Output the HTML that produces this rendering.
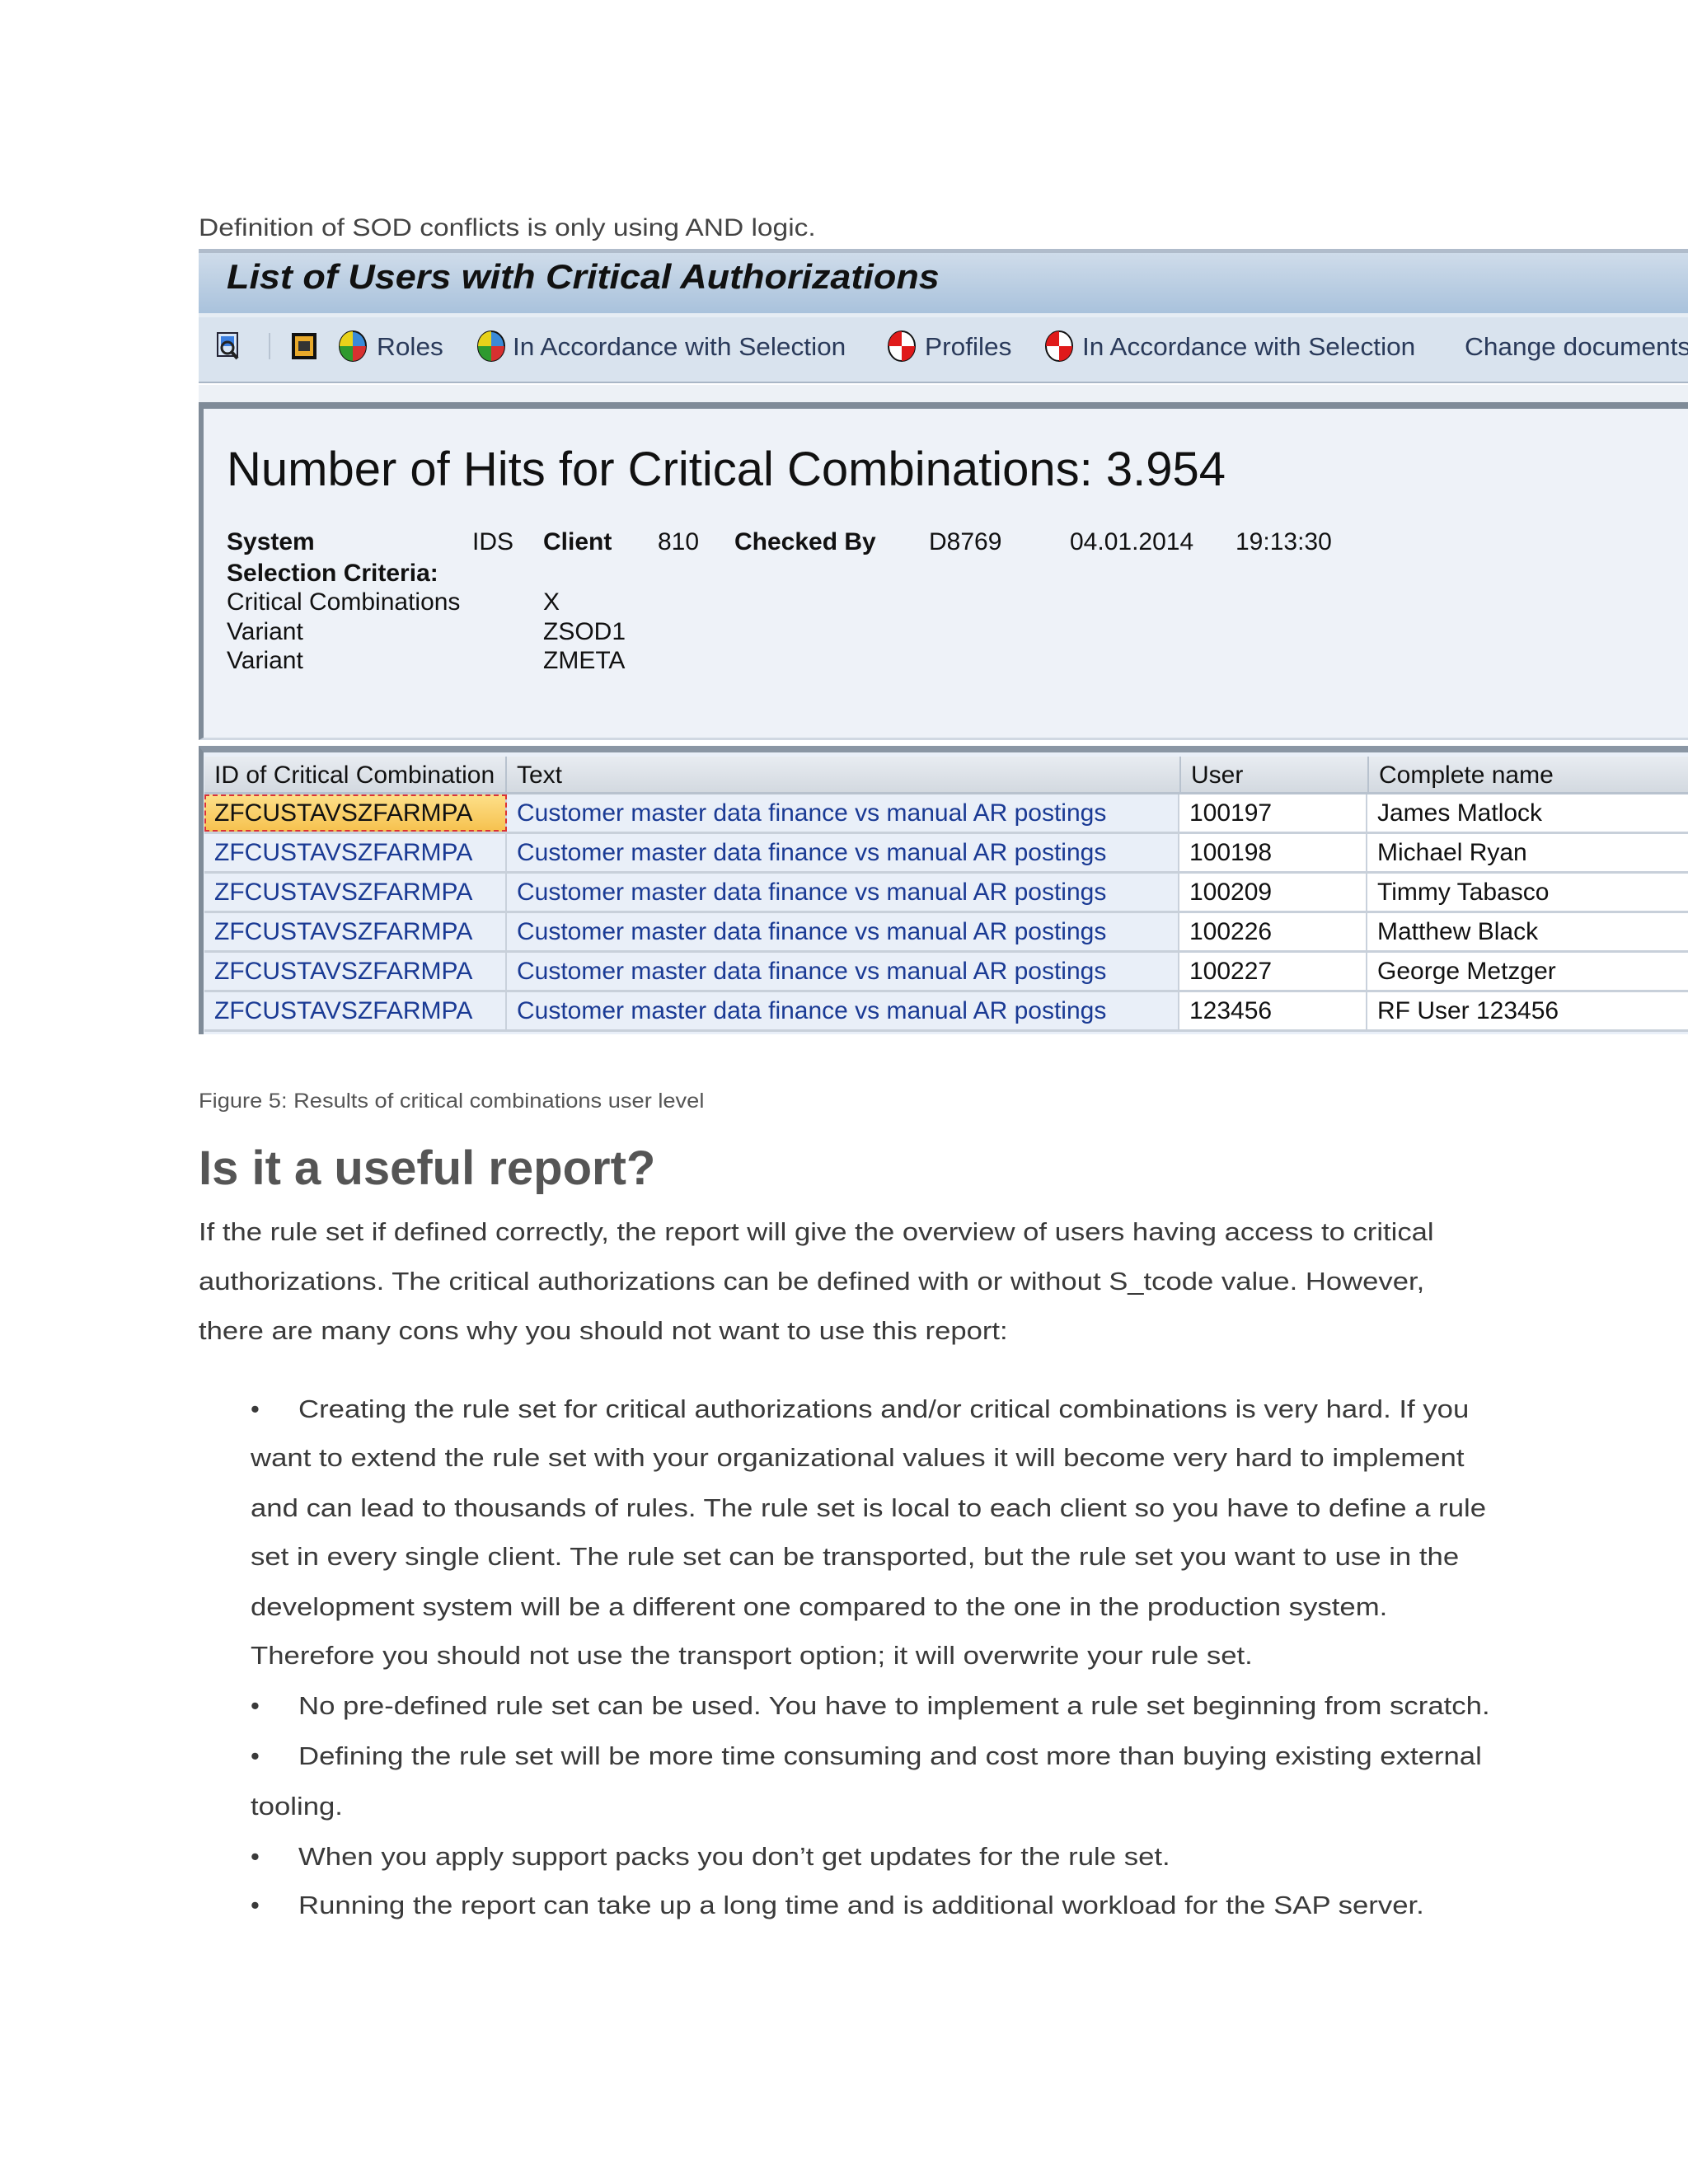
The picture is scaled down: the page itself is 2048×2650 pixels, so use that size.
<!DOCTYPE html>
<html><head><meta charset="utf-8"><style>
*{margin:0;padding:0;box-sizing:border-box}
body{width:2048px;height:2650px;background:#fff;position:relative;overflow:hidden;font-family:"Liberation Sans",sans-serif}
.a{position:absolute;white-space:nowrap}
.sap{font-family:"Liberation Sans",sans-serif;color:#111}
.tb{font-size:31px;color:#2a3a5a;transform:scaleX(1.02);transform-origin:left}
.p{font-size:31px;color:#3a3a3a;left:241px;transform:scaleX(1.117);transform-origin:left}
.b{font-size:31px;color:#3a3a3a;transform:scaleX(1.12);transform-origin:left}
.row{position:absolute;left:248px;width:1800px;height:48px;border-bottom:3px solid #c8d0da}
.cell{position:absolute;top:0;height:45px;line-height:45px;font-size:30px;padding-left:12px;white-space:nowrap}
.c1{left:0;width:367px;background:#e9eff8;color:#1a3a94;border-right:2px solid #c9d1dc}
.c2{left:367px;width:816px;background:#e9eff8;color:#1a3a94;border-right:2px solid #c9d1dc}
.c3{left:1183px;width:228px;background:#fff;color:#111;border-right:2px solid #c9d1dc}
.c4{left:1411px;width:400px;background:#fff;color:#111}
</style></head><body>
<div class="a p" style="top:260px;font-size:30px;color:#444">Definition of SOD conflicts is only using AND logic.</div>

<div class="a" style="left:241px;top:302px;width:1807px;height:5px;background:#b0bccb"></div>
<div class="a" style="left:241px;top:307px;width:1807px;height:73px;background:linear-gradient(#cfdcea,#a9c2dc)"></div>
<div class="a" style="left:275px;top:312px;font-size:42px;font-weight:bold;font-style:italic;color:#111;transform:scaleX(1.07);transform-origin:left">List of Users with Critical Authorizations</div>
<div class="a" style="left:241px;top:380px;width:1807px;height:5px;background:#e6edf4"></div>
<div class="a" style="left:241px;top:385px;width:1807px;height:80px;background:#d9e3ee;border-bottom:2px solid #a9b6c6"></div>
<svg class="a" style="left:262px;top:402px" width="30" height="36" viewBox="0 0 30 36"><rect x="2" y="2" width="24" height="28" fill="#d8e6f6" stroke="#223" stroke-width="2"/><rect x="6" y="6" width="16" height="12" fill="#3a7ee0"/><circle cx="14" cy="20" r="7" fill="none" stroke="#222" stroke-width="3"/><line x1="19" y1="25" x2="26" y2="33" stroke="#222" stroke-width="4"/></svg>
<div class="a" style="left:326px;top:404px;width:2px;height:32px;background:#b8c4d2"></div>
<svg class="a" style="left:352px;top:402px" width="34" height="36"><rect x="2" y="2" width="30" height="32" fill="#111"/><rect x="6" y="6" width="22" height="24" fill="#e8a92a"/><rect x="10" y="12" width="14" height="12" fill="#333"/></svg>
<svg class="a" style="left:410px;top:400px" width="36" height="40" viewBox="0 0 36 40"><ellipse cx="18" cy="20" rx="16" ry="18" fill="#3a8ad8" stroke="#111" stroke-width="2"/><path d="M18 2A16 18 0 0 0 2 20H18Z" fill="#e8d21a"/><path d="M2 20A16 18 0 0 0 18 38V20Z" fill="#2e9a2e"/><path d="M18 38A16 18 0 0 0 34 20H18Z" fill="#d83030"/></svg>
<div class="a tb" style="left:457px;top:403px">Roles</div>
<svg class="a" style="left:578px;top:400px" width="36" height="40" viewBox="0 0 36 40"><ellipse cx="18" cy="20" rx="16" ry="18" fill="#3a8ad8" stroke="#111" stroke-width="2"/><path d="M18 2A16 18 0 0 0 2 20H18Z" fill="#e8d21a"/><path d="M2 20A16 18 0 0 0 18 38V20Z" fill="#2e9a2e"/><path d="M18 38A16 18 0 0 0 34 20H18Z" fill="#d83030"/></svg>
<div class="a tb" style="left:622px;top:403px">In Accordance with Selection</div>
<svg class="a" style="left:1076px;top:400px" width="36" height="40" viewBox="0 0 36 40"><ellipse cx="18" cy="20" rx="16" ry="18" fill="#fff" stroke="#111" stroke-width="2"/><path d="M18 2A16 18 0 0 0 2 20H18Z" fill="#e01a1a"/><path d="M18 38A16 18 0 0 0 34 20H18Z" fill="#e01a1a"/></svg>
<div class="a tb" style="left:1122px;top:403px">Profiles</div>
<svg class="a" style="left:1267px;top:400px" width="36" height="40" viewBox="0 0 36 40"><ellipse cx="18" cy="20" rx="16" ry="18" fill="#fff" stroke="#111" stroke-width="2"/><path d="M18 2A16 18 0 0 0 2 20H18Z" fill="#e01a1a"/><path d="M18 38A16 18 0 0 0 34 20H18Z" fill="#e01a1a"/></svg>
<div class="a tb" style="left:1313px;top:403px">In Accordance with Selection</div>
<div class="a tb" style="left:1777px;top:403px">Change documents</div>
<div class="a" style="left:241px;top:467px;width:1807px;height:23px;background:#edf1f6"></div>

<div class="a" style="left:241px;top:488px;width:1807px;height:410px;background:#eef2f8;border-top:8px solid #7f8b98;border-left:6px solid #7f8b98;border-bottom:3px solid #d0d8e2"></div>
<div class="a sap" style="left:275px;top:536px;font-size:58px">Number of Hits for Critical Combinations: 3.954</div>
<div class="a sap" style="left:275px;top:641px;font-size:30px;font-weight:bold">System</div>
<div class="a sap" style="left:573px;top:641px;font-size:30px">IDS</div>
<div class="a sap" style="left:659px;top:641px;font-size:30px;font-weight:bold">Client</div>
<div class="a sap" style="left:798px;top:641px;font-size:30px">810</div>
<div class="a sap" style="left:891px;top:641px;font-size:30px;font-weight:bold">Checked By</div>
<div class="a sap" style="left:1127px;top:641px;font-size:30px">D8769</div>
<div class="a sap" style="left:1298px;top:641px;font-size:30px">04.01.2014</div>
<div class="a sap" style="left:1499px;top:641px;font-size:30px">19:13:30</div>
<div class="a sap" style="left:275px;top:679px;font-size:30px;font-weight:bold">Selection Criteria:</div>
<div class="a sap" style="left:275px;top:714px;font-size:30px">Critical Combinations</div>
<div class="a sap" style="left:659px;top:714px;font-size:30px">X</div>
<div class="a sap" style="left:275px;top:750px;font-size:30px">Variant</div>
<div class="a sap" style="left:659px;top:750px;font-size:30px">ZSOD1</div>
<div class="a sap" style="left:275px;top:785px;font-size:30px">Variant</div>
<div class="a sap" style="left:659px;top:785px;font-size:30px">ZMETA</div>

<div class="a" style="left:241px;top:905px;width:1807px;height:350px;background:#e9eff8;border-left:6px solid #7f8b98;border-top:8px solid #8a96a4"></div>
<div class="row" style="top:918px;height:46px;border-bottom:3px solid #b8c2ce;background:linear-gradient(#e8ecf1,#d3d9e0)">
<div class="cell" style="left:0;width:367px;color:#111;border-right:2px solid #b8c2ce">ID of Critical Combination</div>
<div class="cell" style="left:367px;color:#111">Text</div>
<div class="cell" style="left:1183px;color:#111;border-left:2px solid #b8c2ce;height:43px">User</div>
<div class="cell" style="left:1411px;color:#111;border-left:2px solid #b8c2ce;height:43px">Complete name</div>
</div>
<div class="row" style="top:964px"><div class="cell c1" style="background:linear-gradient(#fde08a,#f6c14e);color:#111;outline:2px dashed #d33;outline-offset:-2px">ZFCUSTAVSZFARMPA</div><div class="cell c2">Customer master data finance vs manual AR postings</div><div class="cell c3">100197</div><div class="cell c4">James Matlock</div></div>
<div class="row" style="top:1012px"><div class="cell c1">ZFCUSTAVSZFARMPA</div><div class="cell c2">Customer master data finance vs manual AR postings</div><div class="cell c3">100198</div><div class="cell c4">Michael Ryan</div></div>
<div class="row" style="top:1060px"><div class="cell c1">ZFCUSTAVSZFARMPA</div><div class="cell c2">Customer master data finance vs manual AR postings</div><div class="cell c3">100209</div><div class="cell c4">Timmy Tabasco</div></div>
<div class="row" style="top:1108px"><div class="cell c1">ZFCUSTAVSZFARMPA</div><div class="cell c2">Customer master data finance vs manual AR postings</div><div class="cell c3">100226</div><div class="cell c4">Matthew Black</div></div>
<div class="row" style="top:1156px"><div class="cell c1">ZFCUSTAVSZFARMPA</div><div class="cell c2">Customer master data finance vs manual AR postings</div><div class="cell c3">100227</div><div class="cell c4">George Metzger</div></div>
<div class="row" style="top:1204px"><div class="cell c1">ZFCUSTAVSZFARMPA</div><div class="cell c2">Customer master data finance vs manual AR postings</div><div class="cell c3">123456</div><div class="cell c4">RF User 123456</div></div>

<div class="a" style="left:241px;top:1322px;font-size:25px;color:#555;transform:scaleX(1.09);transform-origin:left">Figure 5: Results of critical combinations user level</div>
<div class="a" style="left:241px;top:1384px;font-size:58px;font-weight:bold;color:#555">Is it a useful report?</div>

<div class="a p" style="top:1477px">If the rule set if defined correctly, the report will give the overview of users having access to critical</div>
<div class="a p" style="top:1537px">authorizations. The critical authorizations can be defined with or without S_tcode value. However,</div>
<div class="a p" style="top:1597px">there are many cons why you should not want to use this report:</div>

<div class="a" style="left:304px;top:1692px;font-size:31px;color:#3a3a3a">•</div><div class="a b" style="left:362px;top:1692px">Creating the rule set for critical authorizations and/or critical combinations is very hard. If you</div>
<div class="a b" style="left:304px;top:1751px">want to extend the rule set with your organizational values it will become very hard to implement</div>
<div class="a b" style="left:304px;top:1812px">and can lead to thousands of rules. The rule set is local to each client so you have to define a rule</div>
<div class="a b" style="left:304px;top:1871px">set in every single client. The rule set can be transported, but the rule set you want to use in the</div>
<div class="a b" style="left:304px;top:1932px">development system will be a different one compared to the one in the production system.</div>
<div class="a b" style="left:304px;top:1991px">Therefore you should not use the transport option; it will overwrite your rule set.</div>
<div class="a" style="left:304px;top:2052px;font-size:31px;color:#3a3a3a">•</div><div class="a b" style="left:362px;top:2052px">No pre-defined rule set can be used. You have to implement a rule set beginning from scratch.</div>
<div class="a" style="left:304px;top:2113px;font-size:31px;color:#3a3a3a">•</div><div class="a b" style="left:362px;top:2113px">Defining the rule set will be more time consuming and cost more than buying existing external</div>
<div class="a b" style="left:304px;top:2174px">tooling.</div>
<div class="a" style="left:304px;top:2235px;font-size:31px;color:#3a3a3a">•</div><div class="a b" style="left:362px;top:2235px">When you apply support packs you don’t get updates for the rule set.</div>
<div class="a" style="left:304px;top:2294px;font-size:31px;color:#3a3a3a">•</div><div class="a b" style="left:362px;top:2294px">Running the report can take up a long time and is additional workload for the SAP server.</div>
</body></html>
